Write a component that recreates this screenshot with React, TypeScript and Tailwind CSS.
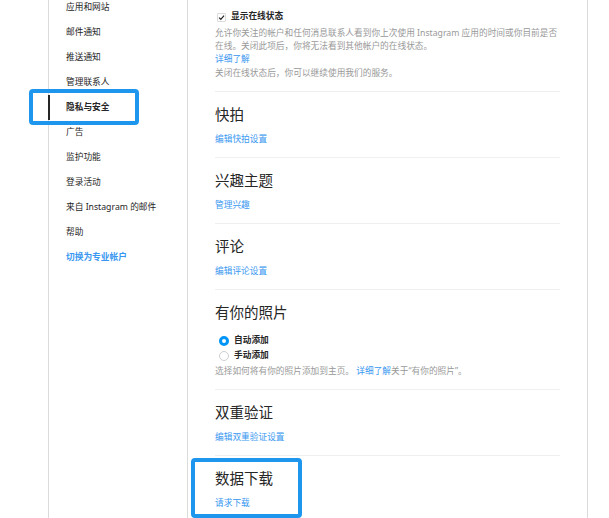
import React from "react";

const font = { fontFamily: '"Noto Sans", "Noto Sans CJK SC", sans-serif' };

const navItems = [
  "应用和网站",
  "邮件通知",
  "推送通知",
  "管理联系人",
  "隐私与安全",
  "广告",
  "监护功能",
  "登录活动",
  "来自 Instagram 的邮件",
  "帮助",
];

function Section({ title, link }: { title: string; link: string }) {
  return (
    <div className="border-t border-[#efefef] pt-[12px] pb-[12px]">
      <div className="h-[20px] leading-[20px] text-[14.5px] text-[#262626]">{title}</div>
      <div className="mt-[9px] h-[12px] leading-[12px] text-[8.7px] text-[#3897f0]">{link}</div>
    </div>
  );
}

export default function App() {
  return (
    <div className="relative w-[609px] h-[518px] overflow-hidden bg-white" style={font}>
      <div className="ml-[48px] w-[540px] h-[600px] flex border-l border-r border-[#dbdbdb]">
        {/* Left nav */}
        <div className="w-[139px] shrink-0 border-r border-[#dbdbdb] -mt-[5px]">
          {navItems.map((item) => {
            const active = item === "隐私与安全";
            return (
              <div
                key={item}
                className={
                  "relative h-[25px] flex items-center pl-[17px] text-[8.7px] " +
                  (active ? "font-bold text-[#262626]" : "text-[#262626]")
                }
              >
                {active && <span className="absolute left-[-1px] top-0 bottom-0 w-[2px] bg-[#262626]" />}
                {item}
              </div>
            );
          })}
          <div className="h-[25px] flex items-center pl-[17px] text-[8.7px] font-semibold text-[#3897f0]">
            切换为专业帐户
          </div>
        </div>

        {/* Right content */}
        <div className="flex-1 px-[27px]">
          <div className="pt-[11px] pb-[11px]">
            <div className="flex items-center h-[12px] gap-[5px] pl-[2px]">
              <span className="w-[9px] h-[9px] border border-[#dbdbdb] rounded-[1px] flex items-center justify-center bg-white">
                <svg width="7" height="7" viewBox="0 0 10 10">
                  <path d="M1.5 5.2 L4 7.6 L8.6 2.4" fill="none" stroke="#262626" strokeWidth="1.8" />
                </svg>
              </span>
              <span className="text-[8.7px] font-bold text-[#262626]">显示在线状态</span>
            </div>
            <div className="mt-[4px] text-[8.7px] leading-[13px] text-[#999999]">
              <div className="whitespace-nowrap">允许你关注的帐户和任何消息联系人看到你上次使用 Instagram 应用的时间或你目前是否</div>
              <div>在线。关闭此项后，你将无法看到其他帐户的在线状态。</div>
              <div className="text-[#3897f0]">详细了解</div>
            </div>
            <div className="mt-[1px] text-[8.7px] leading-[13px] text-[#999999]">
              关闭在线状态后，你可以继续使用我们的服务。
            </div>
          </div>

          <Section title="快拍" link="编辑快拍设置" />
          <Section title="兴趣主题" link="管理兴趣" />
          <Section title="评论" link="编辑评论设置" />

          <div className="border-t border-[#efefef] pt-[12px] pb-[12px]">
            <div className="h-[20px] leading-[20px] text-[14.5px] text-[#262626]">有你的照片</div>
            <div className="mt-[11px] flex items-center h-[15px] gap-[5px] pl-[4px]">
              <span className="w-[10px] h-[10px] rounded-full border-[3px] border-[#0095f6] bg-white" />
              <span className="text-[8.7px] font-bold text-[#262626]">自动添加</span>
            </div>
            <div className="flex items-center h-[15px] gap-[5px] pl-[4px]">
              <span className="w-[10px] h-[10px] rounded-full border border-[#cfcfcf] bg-white" />
              <span className="text-[8.7px] font-bold text-[#262626]">手动添加</span>
            </div>
            <div className="mt-[2px] h-[12px] leading-[12px] text-[8.7px] text-[#999999] whitespace-nowrap">
              选择如何将有你的照片添加到主页。 <span className="text-[#3897f0]">详细了解</span>关于“有你的照片”。
            </div>
          </div>

          <Section title="双重验证" link="编辑双重验证设置" />
          <Section title="数据下载" link="请求下载" />
        </div>
      </div>

      {/* Highlight overlays */}
      <div className="absolute left-[29px] top-[89px] w-[110px] h-[36px] border-[4px] border-[#1f96ee] rounded-[4px]" />
      <div className="absolute left-[191px] top-[458px] w-[111px] h-[60px] border-[4px] border-[#1f96ee] rounded-[4px]" />
    </div>
  );
}
